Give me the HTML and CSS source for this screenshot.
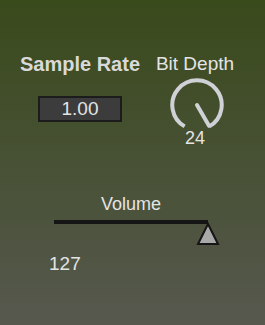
FILE: index.html
```html
<!DOCTYPE html>
<html lang="en">
<head>
    <meta charset="UTF-8">
    <title>Bitcrusher</title>
    <link rel="stylesheet" href="styles.css">
</head>
<body>
    <div class="panel">
        <div class="top-row">
            <div class="control">
                <div class="label label-bold">Sample Rate</div>
                <div class="number-box">1.00</div>
            </div>
            <div class="control">
                <div class="label">Bit Depth</div>
                <svg class="knob" width="56" height="52" viewBox="0 0 56 52">
                    <path d="M15.65 49.39 A24.7 24.7 0 1 1 40.35 49.39" fill="none" stroke="#d0d1d6" stroke-width="4"/>
                    <line x1="28" y1="28" x2="40" y2="48.8" stroke="#d0d1d6" stroke-width="4" stroke-linecap="round"/>
                </svg>
                <div class="value">24</div>
            </div>
        </div>

        <div class="volume">
            <div class="label label-small">Volume</div>
            <div class="slider">
                <svg class="thumb" width="24" height="24" viewBox="0 0 24 24">
                    <polygon points="12,2 22,22 2,22" fill="#a9a9a9" stroke="#151515" stroke-width="2"/>
                </svg>
            </div>
        </div>
        <div class="volume-value">127</div>
    </div>
</body>
</html>
```

FILE: styles.css
```css
body {
    margin: 0;
    padding: 0;
    font-family: "Liberation Sans", Arial, sans-serif;
    color: #e4e4e4;
}

.panel {
    height: 325px;
    box-sizing: border-box;
    padding-top: 54px;
    background: linear-gradient(#394a1b, #56584e);
}

.top-row {
    display: grid;
    grid-template-columns: 160px 70px;
}

.control {
    display: flex;
    flex-direction: column;
    align-items: center;
}

.label {
    font-size: 19px;
    line-height: 20px;
    white-space: nowrap;
}

.label-bold {
    font-size: 20px;
    font-weight: bold;
    color: #d9d9d9;
}

.label-small {
    font-size: 18px;
}

.number-box {
    margin-top: 22px;
    width: 84px;
    height: 26px;
    box-sizing: border-box;
    border: 2px solid #1c1c1c;
    background-color: #3c3c3c;
    font-size: 19px;
    line-height: 22px;
    text-align: center;
}

.knob {
    display: block;
    margin-top: 3px;
    margin-left: 3px;
}

.value {
    font-size: 18px;
    line-height: 18px;
}

.volume {
    margin-top: 47px;
    margin-left: 54px;
    width: 154px;
    text-align: center;
}

.slider {
    position: relative;
    margin-top: 6px;
    height: 4px;
    background-color: #151515;
}

.thumb {
    position: absolute;
    right: -12px;
    top: 2px;
}

.volume-value {
    margin-top: 30px;
    padding-left: 49px;
    font-size: 19px;
    line-height: 20px;
}
```
